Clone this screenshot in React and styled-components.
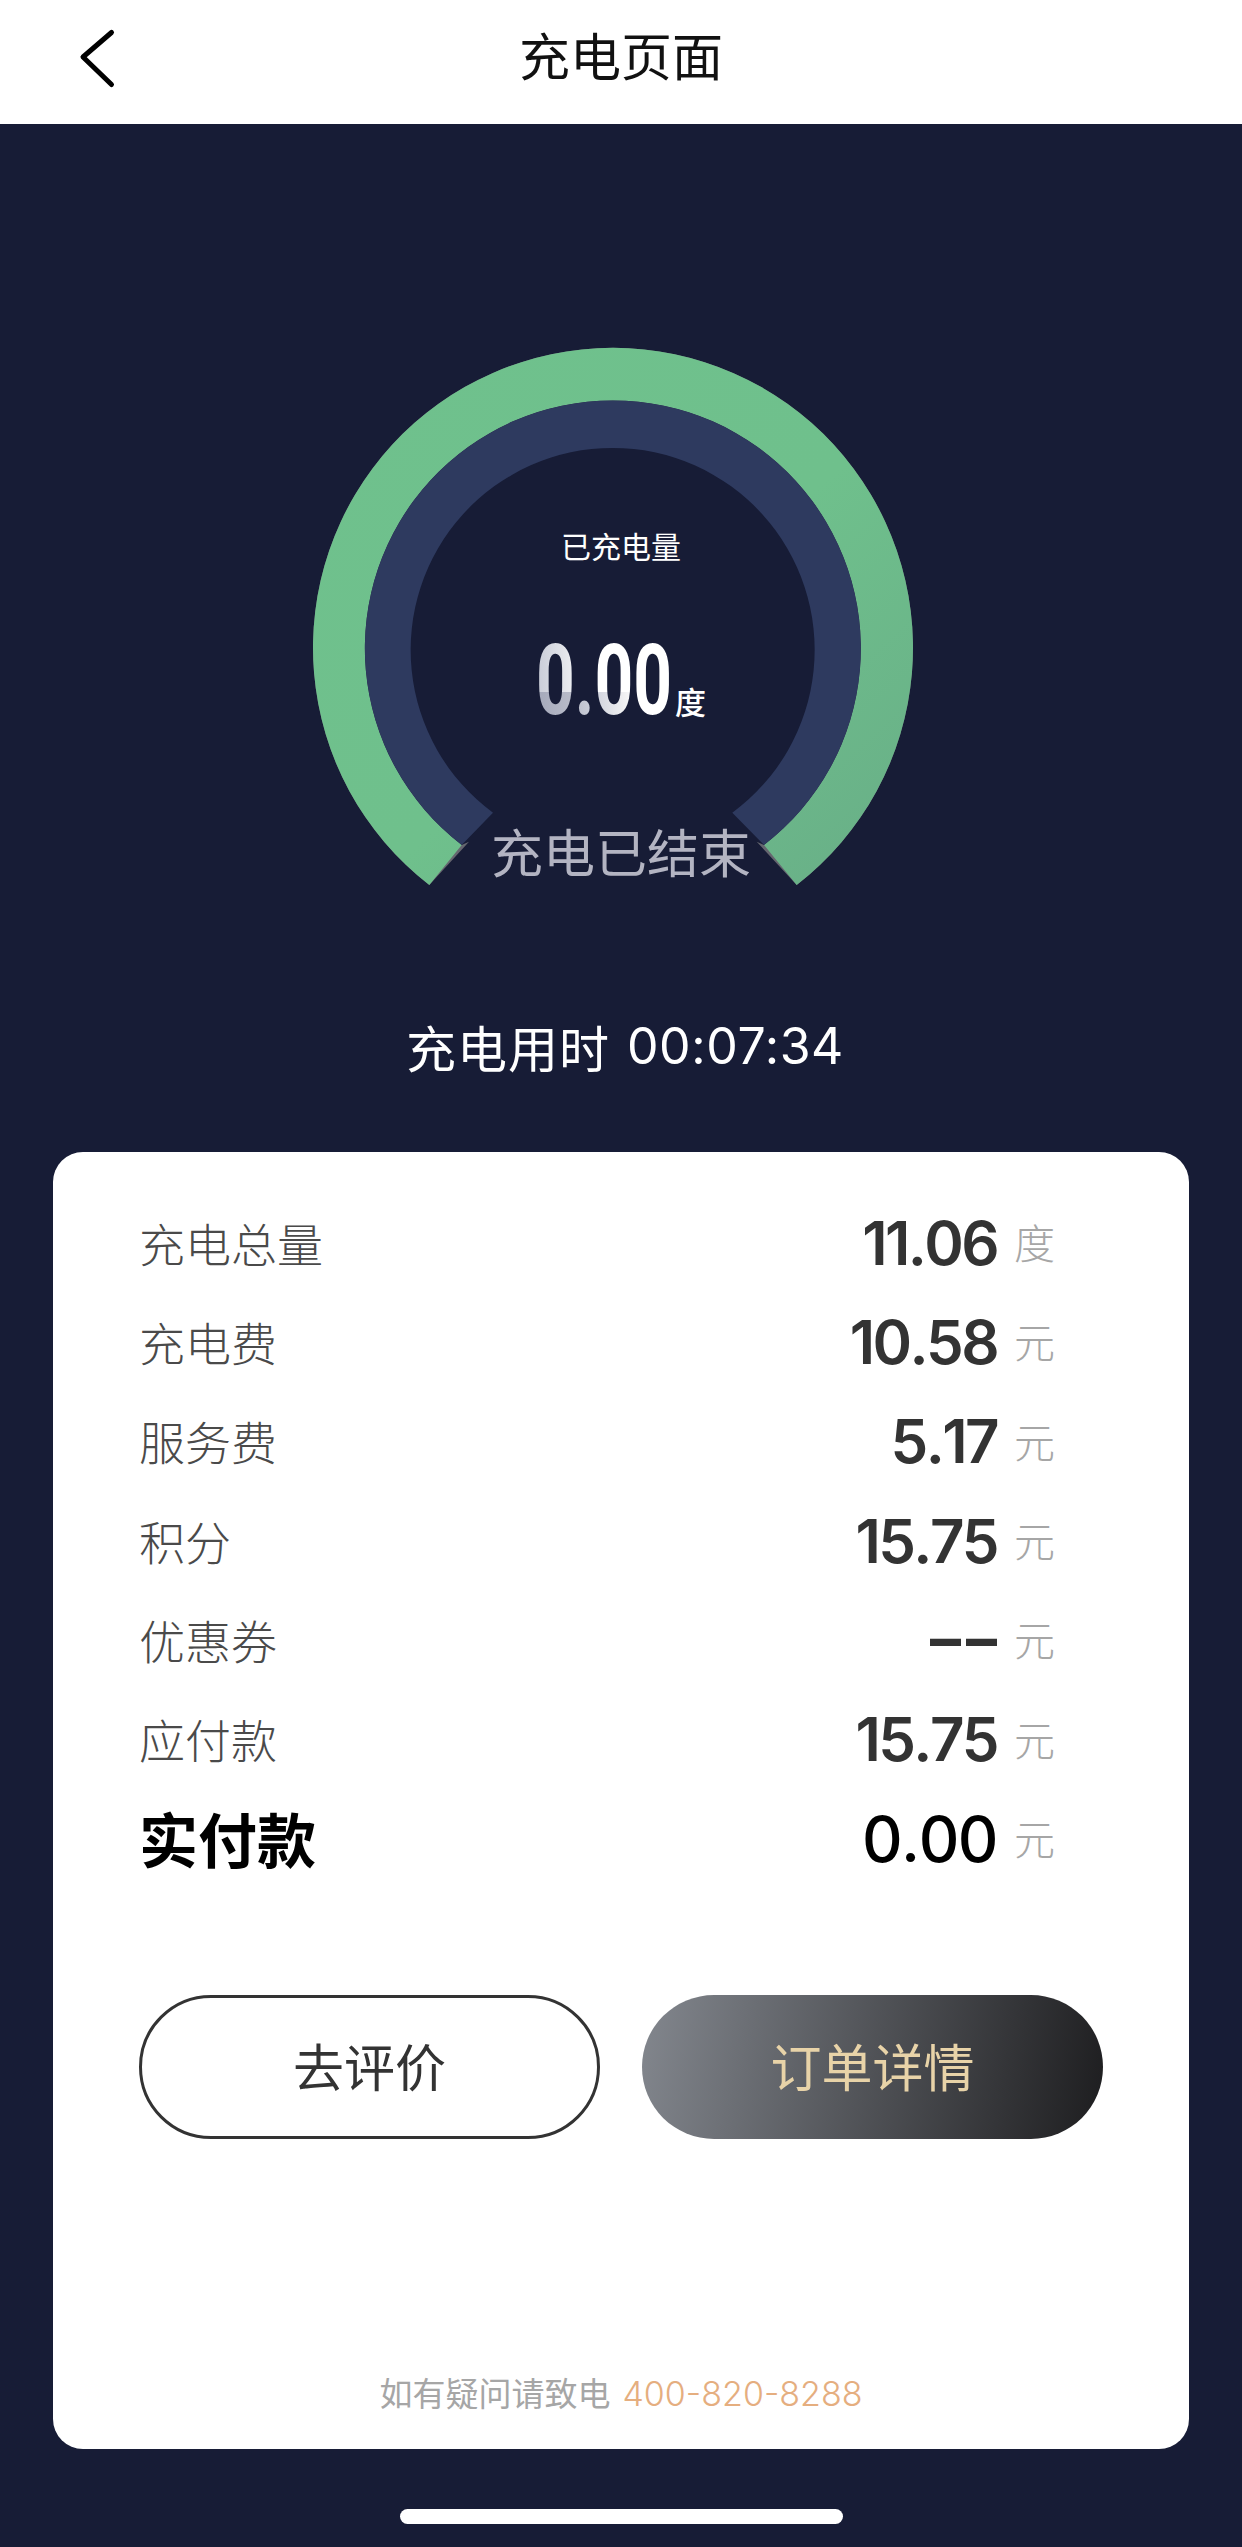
import React from "react";
import styled, { createGlobalStyle } from "styled-components";

const Global = createGlobalStyle`
  html, body { margin: 0; padding: 0; background: #171c36; }
  * { box-sizing: border-box; }
  body { font-family: "Noto Sans CJK SC", "Inter", sans-serif; }
`;

const Page = styled.div`
  width: 1242px;
  height: 2547px;
  background: #171c36;
  display: flex;
  flex-direction: column;
  align-items: center;
`;

const Header = styled.header`
  width: 100%;
  height: 124px;
  flex: none;
  background: #fff;
  display: flex;
  align-items: center;
  justify-content: center;
  position: relative;
`;

const BackIcon = styled.svg`
  position: absolute;
  left: 76px;
  top: 24px;
`;

const Title = styled.h1`
  margin: 0;
  font-size: 51px;
  font-weight: 400;
  line-height: 1;
  color: #111;
  transform: translateY(-8px);
`;

const Stage = styled.section`
  position: relative;
  width: 640px;
  height: 560px;
  margin-top: 216px;
  flex: none;
`;

const GaugeSvg = styled.svg`
  display: block;
`;

const GaugeCaption = styled.div`
  position: absolute;
  left: 0;
  right: 0;
  text-align: center;
  color: ${(p) => p.$color};
  font-size: ${(p) => p.$size}px;
  font-weight: 400;
  line-height: 1;
  top: ${(p) => p.$top}px;
`;

const Reading = styled.div`
  position: absolute;
  left: 0;
  right: 0;
  top: 296px;
  display: flex;
  justify-content: center;
  align-items: flex-end;
  height: 90px;
`;

const DigitsBox = styled.span`
  display: block;
  width: 134px;
  height: 90px;
`;

const Digits = styled.span`
  display: inline-block;
  font-family: "Roboto", sans-serif;
  font-weight: 700;
  font-size: 98px;
  line-height: 90px;
  white-space: nowrap;
  color: transparent;
  transform-origin: left center;
  transform: scaleX(0.69);
  background:
    linear-gradient(90deg, #a4a8ba 0%, #b9bcc9 27%, #cdd0db 42%, #f0f0f2 65%, #fff 75%) left bottom / 100% 34px no-repeat,
    linear-gradient(90deg, #c8cbd7 0%, #ebecf0 27%, #fff 42%, #fff 100%) left top / 100% 56px no-repeat;
  -webkit-background-clip: text;
  background-clip: text;
`;

const ReadingUnit = styled.span`
  color: #fff;
  font-size: 31px;
  font-weight: 500;
  line-height: 31px;
  margin-bottom: 10px;
  margin-left: 5px;
`;

const Elapsed = styled.div`
  flex: none;
  margin-top: 116px;
  padding-left: 8px;
  height: 60px;
  line-height: 60px;
  color: #fff;
  font-size: 50px;
  font-weight: 400;
  letter-spacing: 1px;
  display: flex;
  gap: 17px;
`;

const ElapsedTime = styled.span`
  font-family: "Inter", sans-serif;
  font-weight: 400;
  font-size: 50px;
  letter-spacing: 0.6px;
`;

const Card = styled.main`
  width: 1136px;
  height: 1297px;
  flex: none;
  margin-top: 76px;
  background: #fff;
  border-radius: 30px;
  padding: 40px 0 0;
  display: flex;
  flex-direction: column;
`;

const Rows = styled.div`
  display: flex;
  flex-direction: column;
`;

const Row = styled.div`
  height: 99.3px;
  padding: 0 133px 0 86px;
  display: flex;
  align-items: center;
`;

const Label = styled.span`
  flex: 1;
  font-size: ${(p) => (p.$strong ? 59 : 46)}px;
  font-weight: ${(p) => (p.$strong ? 700 : 300)};
  color: ${(p) => (p.$strong ? "#000" : "#4a4a4a")};
  line-height: 1;
`;

const Value = styled.span`
  font-family: "Inter", sans-serif;
  font-weight: ${(p) => (p.$strong ? 500 : 600)};
  font-size: ${(p) => (p.$strong ? 63 : 60)}px;
  font-kerning: none;
  letter-spacing: ${(p) => (p.$strong ? -1.5 : -2.6)}px;
  line-height: 1;
  padding-top: ${(p) => (p.$strong ? 4 : 2)}px;
  color: ${(p) => (p.$strong ? "#000" : "#333")};
`;

const Dashes = styled.span`
  font-family: "Inter", sans-serif;
  font-weight: 700;
  font-size: 62px;
  letter-spacing: 5px;
  margin-right: -5px;
  line-height: 1;
  color: #333;
`;

const Unit = styled.span`
  width: 42px;
  margin-left: 17px;
  font-size: 41px;
  font-weight: 300;
  color: #a6a6a6;
  line-height: 1;
`;

const Actions = styled.div`
  display: grid;
  grid-template-columns: 1fr 1fr;
  gap: 42px;
  margin: 108px 86px 0;
`;

const Pill = styled.button`
  height: 144px;
  border-radius: 72px;
  font-family: inherit;
  font-size: 51px;
  font-weight: 400;
  padding: 0 0 5px;
  border: ${(p) => (p.$filled ? "none" : "3px solid #333")};
  background: ${(p) => (p.$filled ? "linear-gradient(100deg, #83878e 0%, #1d1d1f 100%)" : "#fff")};
  color: ${(p) => (p.$filled ? "#e8d3a8" : "#333")};
`;

const Footer = styled.footer`
  margin-top: auto;
  padding-bottom: 31px;
  text-align: center;
  font-size: 33px;
  line-height: 48px;
  color: #a6a6a6;
`;

const Phone = styled.span`
  font-family: "Inter", sans-serif;
  font-weight: 300;
  font-size: 34px;
  color: #e5ae7f;
  margin-left: 12px;
`;

const HomeBar = styled.div`
  width: 443px;
  height: 15px;
  flex: none;
  margin-top: 60px;
  background: #fff;
  border-radius: 8px;
`;

const rows = [
  ["充电总量", "11.06", "度"],
  ["充电费", "10.58", "元"],
  ["服务费", "5.17", "元"],
  ["积分", "15.75", "元"],
  ["优惠券", null, "元"],
  ["应付款", "15.75", "元"],
  ["实付款", "0.00", "元", true],
];

function Gauge() {
  // the drawing's origin is page (301, 340); the arcs' centre is (312, 307)
  return (
    <GaugeSvg width="640" height="560" viewBox="0 0 640 560">
      <defs>
        <linearGradient id="arcGreen" x1="0" y1="0" x2="1" y2="1">
          <stop offset="0" stopColor="#6fc18d" />
          <stop offset="0.55" stopColor="#6fc08c" />
          <stop offset="1" stopColor="#68ae87" />
        </linearGradient>
      </defs>
      <path
        d="M128.3 545 A300 300 0 1 1 495.7 545 L455.7 501.7 L463 505 A248 248 0 1 0 160.7 505 L168 501.7 Z"
        fill="#65666f"
      />
      <path
        d="M128.3 545 A300 300 0 1 1 495.7 545 L463 505 A248 248 0 1 0 160.7 505 Z"
        fill="url(#arcGreen)"
      />
      <path
        d="M160.7 505 A248 248 0 1 1 463 505 L431.3 472.7 A202 202 0 1 0 192 472.7 Z"
        fill="#2e3a5f"
      />
    </GaugeSvg>
  );
}

export default function App() {
  return (
    <Page>
      <Global />
      <Header>
        <BackIcon width="44" height="68" viewBox="0 0 44 68" fill="none">
          <path d="M35.5 8.5 L7 33 L35.5 60.5" stroke="#000" strokeWidth="5" strokeLinecap="round" strokeLinejoin="round" />
        </BackIcon>
        <Title>充电页面</Title>
      </Header>
      <Stage>
        <Gauge />
        <GaugeCaption $color="#fff" $size={30} $top={190}>已充电量</GaugeCaption>
        <Reading>
          <DigitsBox><Digits>0.00</Digits></DigitsBox>
          <ReadingUnit>度</ReadingUnit>
        </Reading>
        <GaugeCaption $color="#b3b4c2" $size={52} $top={485}>充电已结束</GaugeCaption>
      </Stage>
      <Elapsed>
        <span>充电用时</span>
        <ElapsedTime>00:07:34</ElapsedTime>
      </Elapsed>
      <Card>
        <Rows>
          {rows.map(([label, value, unit, strong]) => (
            <Row key={label}>
              <Label $strong={strong}>{label}</Label>
              {value === null ? <Dashes>––</Dashes> : <Value $strong={strong}>{value}</Value>}
              <Unit>{unit}</Unit>
            </Row>
          ))}
        </Rows>
        <Actions>
          <Pill>去评价</Pill>
          <Pill $filled>订单详情</Pill>
        </Actions>
        <Footer>
          如有疑问请致电<Phone>400-820-8288</Phone>
        </Footer>
      </Card>
      <HomeBar />
    </Page>
  );
}
